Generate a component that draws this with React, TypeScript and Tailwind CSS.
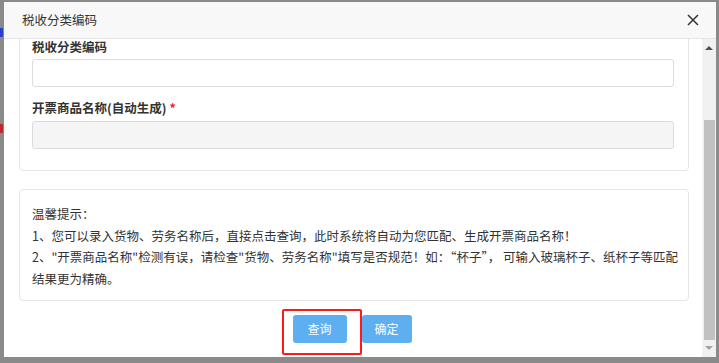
import React from "react";

export default function App() {
  const font = { fontFamily: '"Noto Sans CJK SC", "Noto Sans", sans-serif' };
  return (
    <div
      className="relative w-[719px] h-[363px] overflow-hidden bg-[#8a8a8a] pt-[2px] pl-[4px]"
      style={font}
    >
      {/* background page artifacts */}
      <div className="absolute left-0 top-[28px] w-[3px] h-[9px] bg-[#2a3fd0]" />
      <div className="absolute left-0 top-[124px] w-[3px] h-[9px] bg-[#c0282c]" />

      <div className="flex flex-col w-[712px] h-[355px] bg-white">
        {/* header */}
        <div className="flex items-center justify-between h-[37px] bg-[#f8f8f8] border-b border-[#e5e5e5] pl-[18px] pr-[17px] shrink-0">
          <span className="text-[12.5px] text-[#333]">税收分类编码</span>
          <svg width="12" height="12" viewBox="0 0 12 12">
            <path d="M1 1L11 11M11 1L1 11" stroke="#333" strokeWidth="1.5" />
          </svg>
        </div>

        {/* body */}
        <div className="flex flex-1 min-h-0">
          <div className="flex-1 overflow-hidden pl-[15px] pr-[13px]">
            <div className="mt-[-13px]">
              {/* panel 1 */}
              <div className="border border-[#e6e6e6] rounded-[4px] pl-[12px] pr-[14px] pt-[12px] pb-[21px]">
                <div className="text-[12.5px] leading-[16px] font-bold text-[#333]">税收分类编码</div>
                <div className="mt-[4px] h-[28px] border border-[#dcdcdc] rounded-[3px] bg-white" />
                <div className="mt-[11px] text-[12.5px] leading-[20px] font-bold text-[#333]">
                  开票商品名称(自动生成)<span className="text-[#ff2020] ml-[3px]">*</span>
                </div>
                <div className="mt-[3px] h-[28px] border border-[#dcdcdc] rounded-[3px] bg-[#f5f5f5]" />
              </div>

              {/* panel 2 */}
              <div className="mt-[18px] border border-[#e6e6e6] rounded-[4px] pl-[12px] pr-[10px] pt-[13px] pb-[11px] text-[12.5px] leading-[21.5px] text-[#333]">
                <div>温馨提示：</div>
                <div className="whitespace-nowrap">1、您可以录入货物、劳务名称后，直接点击查询，此时系统将自动为您匹配、生成开票商品名称！</div>
                <div className="whitespace-nowrap">
                  2、"开票商品名称"检测有误，请检查"货物、劳务名称"填写是否规范！如：“杯子”， 可输入玻璃杯子、纸杯子等匹配
                </div>
                <div>结果更为精确。</div>
              </div>

              {/* buttons */}
              <div className="relative mt-[14px] flex justify-center gap-[15px] pr-[4px]">
                <button className="w-[54px] h-[28px] rounded-[3px] bg-[#5eaef2] text-white text-[12px]">查询</button>
                <button className="w-[50px] h-[28px] rounded-[3px] bg-[#5eaef2] text-white text-[12px]">确定</button>
                <div className="absolute left-[263px] top-[-6px] w-[80px] h-[46px] border-2 border-[#ff1a1a] rounded-[2px]" />
              </div>
            </div>
          </div>

          {/* scrollbar */}
          <div className="relative w-[14px] bg-[#f1f1f1] flex flex-col items-center">
            <svg className="mt-[6px]" width="8" height="5" viewBox="0 0 8 5">
              <path d="M0 5L4 1L8 5Z" fill="#505050" />
            </svg>
            <div className="mt-[70px] w-[11px] h-[220px] bg-[#c1c1c1]" />
            <svg className="mt-[6px]" width="8" height="5" viewBox="0 0 8 5">
              <path d="M0 0L4 4L8 0Z" fill="#a3a3a3" />
            </svg>
          </div>
        </div>
      </div>
    </div>
  );
}
